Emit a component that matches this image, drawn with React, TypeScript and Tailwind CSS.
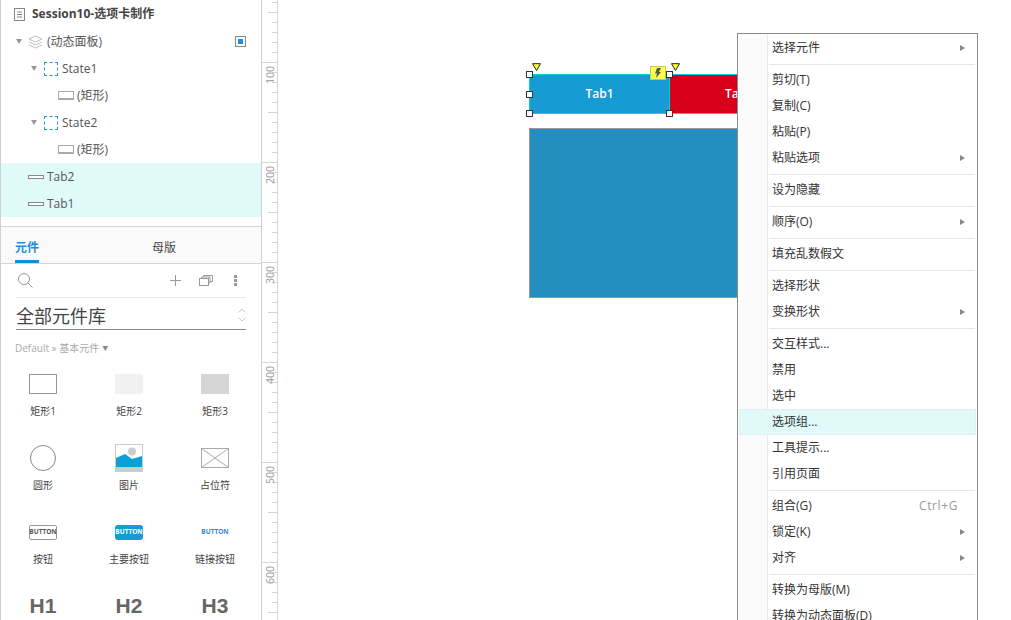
const font = { fontFamily: '"Open Sans", "Noto Sans CJK SC", sans-serif' };
const headingFont = { fontFamily: '"Liberation Sans", sans-serif' };

function Caret() {
  return <span className="w-0 h-0 border-x-[3.5px] border-x-transparent border-t-[5px] border-t-[#999] shrink-0" />;
}

function DashedBox() {
  return <span className="w-[14px] h-[14px] border border-dashed border-[#1a9ae0] shrink-0" />;
}

function RectIcon() {
  return <span className="w-[16px] h-[9px] bg-white border border-[#aaa] border-b-2 shrink-0" />;
}

function TreeRow({ indent, children, active }: { indent: number; children: React.ReactNode; active?: boolean }) {
  return (
    <div className={`h-[27px] shrink-0 flex items-center text-[12px] text-[#555] ${active ? 'bg-[#e0fafa]' : ''}`} style={{ paddingLeft: indent }}>
      {children}
    </div>
  );
}

function Widget({ icon, label }: { icon: React.ReactNode; label: string }) {
  return (
    <div className="h-[74px] flex flex-col items-center">
      <div className="h-[36px] w-full flex items-center justify-center">{icon}</div>
      <div className="mt-[2px] text-[10px] leading-[14px] text-[#444]">{label}</div>
    </div>
  );
}

function Ruler() {
  const ticks = Array.from({ length: 62 }, (_, i) => i);
  const labels = [100, 200, 300, 400, 500, 600];
  const tickWidth = (y: number) => {
    if ((y - 62) % 100 === 0) return 16;
    if ((y - 62) % 50 === 0) return 9;
    return 5;
  };
  return (
    <div className="relative w-[16px] h-full border-r border-[#d4d4d4] shrink-0 overflow-hidden">
      {ticks.map((i) => (
        <div
          key={i}
          className="absolute right-0 h-px bg-[#d4d4d4]"
          style={{ top: 2 + i * 10, width: tickWidth(2 + i * 10) }}
        />
      ))}
      {labels.map((n) => (
        <div
          key={n}
          className="absolute left-0 w-[15px] h-[10px] flex items-center justify-center text-[10.5px] leading-[10px] text-[#999]"
          style={{ top: n - 30 }}
        >
          <span className="-rotate-90 inline-block">{n}</span>
        </div>
      ))}
    </div>
  );
}

type MenuEntry = { label: string; arrow?: boolean; hint?: string; active?: boolean } | 'sep';

const menu: MenuEntry[] = [
  { label: '选择元件', arrow: true },
  'sep',
  { label: '剪切(T)' },
  { label: '复制(C)' },
  { label: '粘贴(P)' },
  { label: '粘贴选项', arrow: true },
  'sep',
  { label: '设为隐藏' },
  'sep',
  { label: '顺序(O)', arrow: true },
  'sep',
  { label: '填充乱数假文' },
  'sep',
  { label: '选择形状' },
  { label: '变换形状', arrow: true },
  'sep',
  { label: '交互样式...' },
  { label: '禁用' },
  { label: '选中' },
  { label: '选项组...', active: true },
  { label: '工具提示...' },
  { label: '引用页面' },
  'sep',
  { label: '组合(G)', hint: 'Ctrl+G' },
  { label: '锁定(K)', arrow: true },
  { label: '对齐', arrow: true },
  'sep',
  { label: '转换为母版(M)' },
  { label: '转换为动态面板(D)' },
];

function ContextMenu() {
  return (
    <div className="absolute left-[737px] top-[33px] w-[241px] h-[600px] bg-white border border-[#8a8a8a] py-[1px] px-[1px]">
      <div className="absolute left-[1px] top-0 bottom-0 w-[29px] bg-[#fbfbfb] border-r border-[#e8e8e8]" />
      <div className="relative">
        {menu.map((m, i) =>
          m === 'sep' ? (
            <div key={i} className="h-[6px] flex items-center pl-[30px] pr-[1px]">
              <div className="h-px w-full bg-[#e6e6e6]" />
            </div>
          ) : (
            <div
              key={i}
              className={`h-[26px] flex items-center pr-[11px] text-[12px] text-[#333] ${m.active ? 'pl-[32px] bg-[#e0fafa] border border-[#e4eeee]' : 'pl-[33px]'}`}
            >
              <span>{m.label}</span>
              {m.hint && <span className="ml-auto mr-[7px] text-[#999] tracking-[0.6px]">{m.hint}</span>}
              {m.arrow && <span className="ml-auto w-0 h-0 border-y-[3px] border-y-transparent border-l-[5px] border-l-[#888]" />}
            </div>
          ),
        )}
      </div>
    </div>
  );
}

function Handle({ className }: { className: string }) {
  return <div className={`absolute w-[7px] h-[7px] bg-white border border-[#333] ${className}`} />;
}

function Marker({ className }: { className: string }) {
  return (
    <svg className={`absolute ${className}`} width="9" height="8" viewBox="0 0 9 8">
      <path d="M0.5 0.7h8L4.500 7.500z" fill="#ffff33" stroke="#222" />
    </svg>
  );
}

export default function App() {
  return (
    <div className="w-[1011px] h-[620px] bg-white flex overflow-hidden relative" style={font}>
      {/* Left panel */}
      <div className="w-[262px] h-full border-x border-[#d0d0d0] shrink-0 flex flex-col overflow-hidden">
        <div className="h-[28px] shrink-0 flex items-center pl-[13px] text-[12px] font-bold text-[#444]">
          <svg width="11" height="13" viewBox="0 0 11 13" className="mr-[7px]">
            <rect x="0.5" y="0.5" width="10" height="12" fill="none" stroke="#888" />
            <path d="M3 4h5M3 6.500h5M3 9h5" stroke="#888" />
          </svg>
          Session10-选项卡制作
        </div>
        <TreeRow indent={15}>
          <Caret />
          <svg width="15" height="14" viewBox="0 0 15 14" className="ml-[6px] mr-[4px]" fill="none" stroke="#c0c0c0">
            <path d="M7.500 1L14 4 7.500 7 1 4z" />
            <path d="M1 7l6.500 3L14 7" />
            <path d="M1 10l6.500 3L14 10" />
          </svg>
          (动态面板)
          <span className="ml-auto mr-[15px] w-[11px] h-[11px] border border-[#888] flex items-center justify-center">
            <span className="w-[5px] h-[5px] bg-[#1a8fe0]" />
          </span>
        </TreeRow>
        <TreeRow indent={30}>
          <Caret />
          <span className="ml-[7px] mr-[4px] flex"><DashedBox /></span>
          State1
        </TreeRow>
        <TreeRow indent={57}>
          <RectIcon />
          <span className="ml-[3px]">(矩形)</span>
        </TreeRow>
        <TreeRow indent={30}>
          <Caret />
          <span className="ml-[7px] mr-[4px] flex"><DashedBox /></span>
          State2
        </TreeRow>
        <TreeRow indent={57}>
          <RectIcon />
          <span className="ml-[3px]">(矩形)</span>
        </TreeRow>
        <TreeRow indent={27} active>
          <span className="w-[16px] h-[4px] bg-white border border-[#888] mr-[3px]" />
          Tab2
        </TreeRow>
        <TreeRow indent={27} active>
          <span className="w-[16px] h-[4px] bg-white border border-[#888] mr-[3px]" />
          Tab1
        </TreeRow>

        <div className="mt-[9px] h-[38px] bg-[#fafafa] border-y border-[#d4d4d4] flex text-[12px] shrink-0">
          <div className="relative ml-[14px] w-[24px] pt-[6px] flex items-center justify-center font-bold text-[#1a8fe0]">
            元件
            <div className="absolute left-0 right-0 bottom-0 h-[3px] bg-[#0a8fe0]" />
          </div>
          <div className="ml-[113px] pt-[6px] flex items-center text-[#444]">母版</div>
        </div>

        <div className="pl-[15px] pr-[15px] shrink-0">
          <div className="h-[34px] flex items-center border-b border-[#e6e6e6]">
            <svg width="15" height="15" viewBox="0 0 15 15" fill="none" stroke="#999" className="ml-[2px]">
              <circle cx="6" cy="6" r="5.500" />
              <path d="M10 10l4.500 4.500" />
            </svg>
            <svg width="11" height="11" viewBox="0 0 11 11" stroke="#999" className="ml-auto">
              <path d="M5.500 0v11M0 5.500h11" />
            </svg>
            <svg width="14" height="11" viewBox="0 0 14 11" fill="none" stroke="#999" className="ml-[18px]">
              <rect x="0.500" y="3.500" width="9" height="7" />
              <path d="M2.500 3.500v-1.500h8.500v6h-1.500M4.500 2V0.500h9V6.500H11" />
            </svg>
            <span className="ml-[21px] mr-[9px] flex flex-col gap-[1px]">
              <span className="w-[3px] h-[3px] bg-[#999]" />
              <span className="w-[3px] h-[3px] bg-[#999]" />
              <span className="w-[3px] h-[3px] bg-[#999]" />
            </span>
          </div>
          <div className="h-[32px] pt-[5px] flex items-center justify-between border-b border-[#888] text-[18px] text-[#444]">
            全部元件库
            <svg width="8" height="14" viewBox="0 0 8 14" fill="none" stroke="#ccc" className="-mt-[3px]">
              <path d="M0.500 4.500L4 1l3.500 3.500M0.500 9.500L4 13l3.500-3.500" />
            </svg>
          </div>
          <div className="h-[36px] -ml-px flex items-center text-[10px] text-[#aaa]">
            Default » 基本元件 <span className="ml-[3px] text-[6px] text-[#888]">▼</span>
          </div>
        </div>

        <div className="grid grid-cols-[repeat(3,86px)] -ml-px">
          <Widget label="矩形1" icon={<span className="w-[28px] h-[20px] border border-[#999]" />} />
          <Widget label="矩形2" icon={<span className="w-[28px] h-[20px] bg-[#f1f1f1]" />} />
          <Widget label="矩形3" icon={<span className="w-[28px] h-[20px] bg-[#d5d5d5]" />} />
          <Widget label="圆形" icon={<span className="w-[26px] h-[26px] rounded-full border border-[#888]" />} />
          <Widget
            label="图片"
            icon={
              <svg width="28" height="28" viewBox="0 0 28 28">
                <rect x="0.500" y="0.500" width="27" height="27" fill="#fff" stroke="#ccc" />
                <rect x="1" y="23" width="26" height="4" fill="#ccc" />
                <path d="M1 14l9-4 7 5 10-3V23H1z" fill="#0aa0dc" />
                <circle cx="17" cy="7.500" r="4" fill="#ccc" />
              </svg>
            }
          />
          <Widget
            label="占位符"
            icon={
              <svg width="28" height="20" viewBox="0 0 28 20" fill="none" stroke="#aaa">
                <rect x="0.500" y="0.500" width="27" height="19" />
                <path d="M0.500 0.500l27 19M27.500 0.500l-27 19" />
              </svg>
            }
          />
          <Widget
            label="按钮"
            icon={
              <span className="w-[28px] h-[15px] border border-[#999] rounded-[2px] flex items-center justify-center text-[6.5px] font-bold text-[#555]">
                BUTTON
              </span>
            }
          />
          <Widget
            label="主要按钮"
            icon={
              <span className="w-[28px] h-[15px] bg-[#169bd5] rounded-[3px] flex items-center justify-center text-[6.5px] font-bold text-white">
                BUTTON
              </span>
            }
          />
          <Widget label="链接按钮" icon={<span className="text-[6.5px] font-bold text-[#3c85cc]">BUTTON</span>} />
          <Widget label="" icon={<span className="text-[21px] font-bold text-[#666]" style={headingFont}>H1</span>} />
          <Widget label="" icon={<span className="text-[21px] font-bold text-[#666]" style={headingFont}>H2</span>} />
          <Widget label="" icon={<span className="text-[21px] font-bold text-[#666]" style={headingFont}>H3</span>} />
        </div>
      </div>

      <Ruler />

      {/* Canvas */}
      <div className="flex-1 relative" />
      <div className="absolute left-[529px] top-[128px] w-[220px] h-[170px] bg-[#228fbf] border border-[#999]" />
      <div className="absolute left-[669px] top-[74px] w-[80px] h-[40px] bg-[#d9001b] border-y border-[#00d5d5] flex items-center pl-[56px] text-[12px] font-semibold text-white">
        Tab2
      </div>
      <div className="absolute left-[529px] top-[74px] w-[141px] h-[40px] bg-[#169bd5] border border-[#00d5d5] flex items-center justify-center text-[12px] font-semibold text-white">
        Tab1
      </div>
      <Handle className="left-[526px] top-[71px]" />
      <Handle className="left-[526px] top-[91px]" />
      <Handle className="left-[526px] top-[110px]" />
      <Handle className="left-[666px] top-[71px]" />
      <Handle className="left-[666px] top-[110px]" />
      <Marker className="left-[532px] top-[63px]" />
      <Marker className="left-[671px] top-[63px]" />
      <div className="absolute left-[650px] top-[66px] w-[16px] h-[14px] bg-[#ffff4d] border border-[#c8c860] flex items-center justify-center">
        <svg width="8" height="10" viewBox="0 0 8 10"><path d="M3 0h4L5 4h2L2 10l1-4.500H1z" fill="#555" /></svg>
      </div>

      <ContextMenu />
    </div>
  );
}
